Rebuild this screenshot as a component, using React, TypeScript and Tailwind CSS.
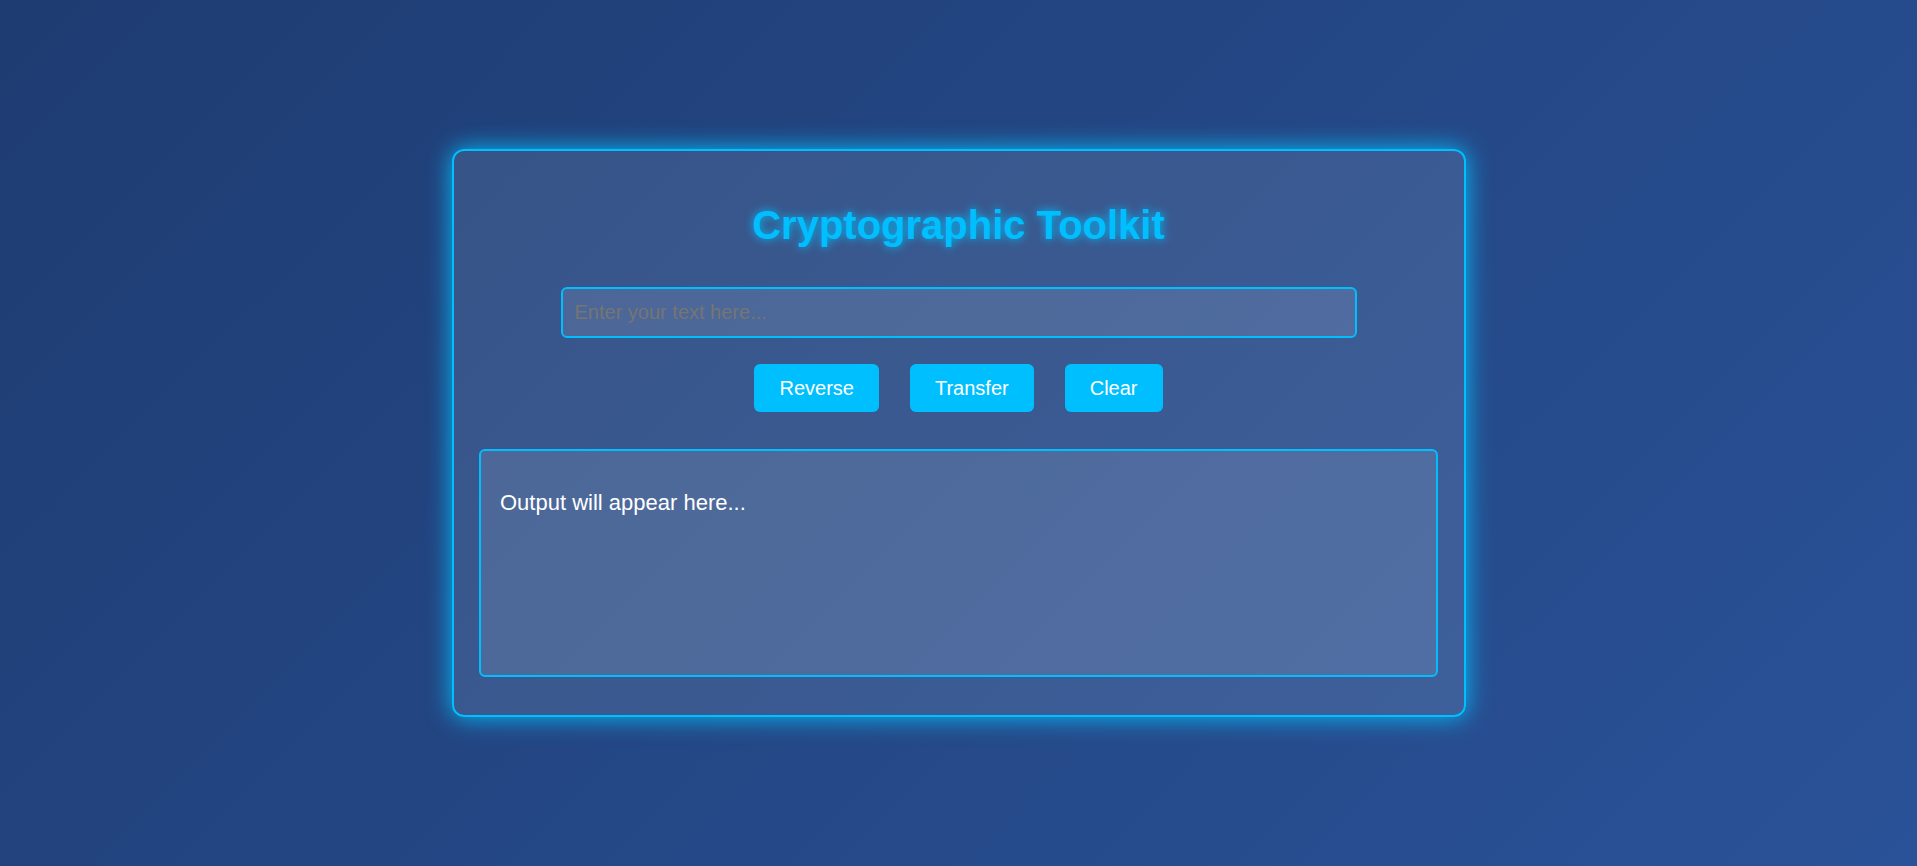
export default function App() {
    const buttons = ["Reverse", "Transfer", "Clear"]

    return (
        <div className="w-full h-[866px] flex items-center justify-center bg-[linear-gradient(135deg,#1e3c72,#2a5298)] font-['Liberation_Sans',Arial,sans-serif]">
            <div className="w-[1014px] h-[568px] rounded-[12px] border-2 border-[#00bfff] bg-white/10 shadow-[0_0_25px_#00bfff] px-[24px] pt-[51px] pb-[38px] flex flex-col items-center">
                <h1 className="text-[40px] leading-[46px] font-bold text-[#00bfff] [text-shadow:0_0_10px_#00bfff]">
                    Cryptographic Toolkit
                </h1>
                <input
                    type="text"
                    placeholder="Enter your text here..."
                    className="mt-[39px] w-[796px] h-[51px] rounded-[6px] border-2 border-[#00bfff] bg-white/10 px-[12px] text-[20px] text-white placeholder:text-[#757575] outline-none"
                />
                <div className="mt-[26px] flex gap-[31px]">
                    {buttons.map((label) => (
                        <button
                            key={label}
                            className="h-[48px] px-[25px] rounded-[6px] bg-[#00bfff] text-white text-[20px]"
                        >
                            {label}
                        </button>
                    ))}
                </div>
                <div className="mt-[37px] w-[959px] h-[228px] rounded-[6px] border-2 border-[#00bfff] bg-white/10 px-[19px] pt-[35px]">
                    <p className="text-[22px] text-white">Output will appear here...</p>
                </div>
            </div>
        </div>
    )
}
